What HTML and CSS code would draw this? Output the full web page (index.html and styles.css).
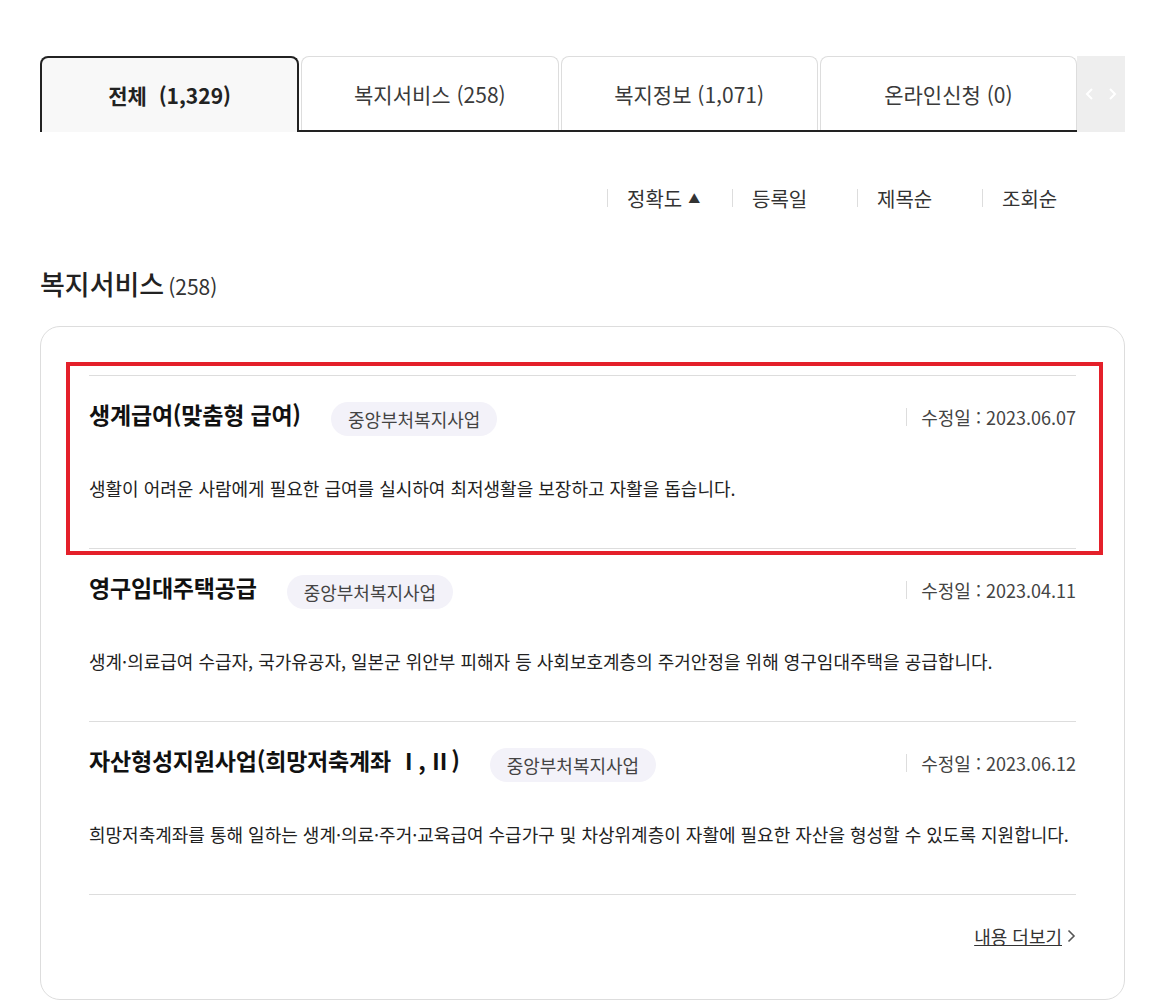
FILE: index.html
```html
<!DOCTYPE html>
<html lang="ko">
<head>
    <meta charset="UTF-8">
    <meta name="viewport" content="width=device-width, initial-scale=1.0">
    <title>복지서비스 검색결과</title>
    <link rel="stylesheet" href="styles.css">
</head>
<body>
    <div class="wrap">
        <div class="tabs">
            <a href="#" class="tab active">전체 &nbsp;(1,329)</a>
            <a href="#" class="tab">복지서비스 (258)</a>
            <a href="#" class="tab">복지정보 (1,071)</a>
            <a href="#" class="tab">온라인신청 (0)</a>
            <div class="tab-arrows">
                <svg width="34" height="14" viewBox="0 0 34 14">
                    <polyline points="8,2 3,7 8,12" fill="none" stroke="#fff" stroke-width="2"/>
                    <polyline points="26,2 31,7 26,12" fill="none" stroke="#fff" stroke-width="2"/>
                </svg>
            </div>
        </div>

        <div class="sort">
            <a href="#" class="sort-item">정확도 <span class="tri">▲</span></a>
            <a href="#" class="sort-item">등록일</a>
            <a href="#" class="sort-item">제목순</a>
            <a href="#" class="sort-item">조회순</a>
        </div>

        <h2 class="section-title">복지서비스<span class="count">(258)</span></h2>

        <div class="card">
            <ul class="list">
                <li class="item selected">
                    <div class="item-head">
                        <strong class="item-title">생계급여(맞춤형 급여)</strong>
                        <span class="badge">중앙부처복지사업</span>
                        <span class="date">수정일 : 2023.06.07</span>
                    </div>
                    <p class="item-desc">생활이 어려운 사람에게 필요한 급여를 실시하여 최저생활을 보장하고 자활을 돕습니다.</p>
                    <span class="highlight"></span>
                </li>
                <li class="item">
                    <div class="item-head">
                        <strong class="item-title">영구임대주택공급</strong>
                        <span class="badge">중앙부처복지사업</span>
                        <span class="date">수정일 : 2023.04.11</span>
                    </div>
                    <p class="item-desc">생계·의료급여 수급자, 국가유공자, 일본군 위안부 피해자 등 사회보호계층의 주거안정을 위해 영구임대주택을 공급합니다.</p>
                </li>
                <li class="item">
                    <div class="item-head">
                        <strong class="item-title">자산형성지원사업(희망저축계좌 <span class="roman">Ⅰ, Ⅱ</span>)</strong>
                        <span class="badge">중앙부처복지사업</span>
                        <span class="date">수정일 : 2023.06.12</span>
                    </div>
                    <p class="item-desc">희망저축계좌를 통해 일하는 생계·의료·주거·교육급여 수급가구 및 차상위계층이 자활에 필요한 자산을 형성할 수 있도록 지원합니다.</p>
                </li>
            </ul>
            <div class="more">
                <a href="#" class="more-link">내용 더보기</a>
                <svg class="more-icon" width="9" height="14" viewBox="0 0 9 14">
                    <polyline points="1.5,1.5 7,7 1.5,12.5" fill="none" stroke="#555" stroke-width="1.6"/>
                </svg>
            </div>
        </div>
    </div>
</body>
</html>
```

FILE: styles.css
```css
* {box-sizing: border-box;}
body {
    margin: 0;
    padding: 0;
    font-family: "Noto Sans CJK KR", "Noto Sans", sans-serif;
    color: #222;
    background: #fff;
}
a {
    color: inherit;
    text-decoration: none;
}
.wrap {
    width: 1085px;
    margin-left: 40px;
    padding-top: 56px;
}

/* tabs */
.tabs {
    display: flex;
    height: 76px;
    background: linear-gradient(to top, #222 2px, transparent 2px);
}
.tab {
    flex: 1;
    display: flex;
    align-items: center;
    justify-content: center;
    border: 1px solid #ddd;
    border-bottom: none;
    border-radius: 8px 8px 0 0;
    margin-right: 2px;
    margin-bottom: 2px;
    font-size: 21px;
    color: #3a3a3a;
}
.tab.active {
    border: 2px solid #222;
    border-bottom: none;
    margin-bottom: 0;
    background-color: #f8f8f8;
    color: #222;
    font-weight: bold;
}
.tab:nth-child(4) {
    margin-right: 0;
}
.tab-arrows {
    width: 48px;
    display: flex;
    align-items: center;
    justify-content: center;
    background-color: #eee;
}

/* sort */
.sort {
    display: flex;
    justify-content: flex-end;
    height: 36px;
    margin-top: 48px;
    padding-right: 18px;
}
.sort-item {
    width: 125px;
    display: flex;
    align-items: center;
    padding-left: 20px;
    font-size: 20px;
    color: #333;
    position: relative;
}
.sort-item::before {
    content: "";
    position: absolute;
    left: 0;
    top: 9px;
    height: 18px;
    border-left: 1px solid #ddd;
}
.tri {
    font-size: 12px;
    margin-left: 6px;
    color: #333;
}

/* title */
.section-title {
    height: 36px;
    margin: 50px 0 24px;
    font-size: 27px;
    line-height: 36px;
    font-weight: 500;
    color: #222;
}
.count {
    font-size: 21px;
    line-height: 1;
    font-weight: 400;
    color: #333;
    margin-left: 4px;
}

/* card */
.card {
    border: 1px solid #ddd;
    border-radius: 20px;
    padding: 48px 48px 0;
}
.list {
    list-style: none;
    margin: 0;
    padding: 0;
}
.item {
    position: relative;
    border-top: 1px solid #ddd;
    padding: 26px 0 47px;
}
.item-head {
    display: flex;
    align-items: center;
    height: 34px;
}
.item-title {
    font-size: 23px;
    font-weight: bold;
    color: #111;
    letter-spacing: -0.2px;
    margin-bottom: 10px;
}
.roman {
    letter-spacing: -2px;
    margin-right: 2px;
}
.badge {
    display: inline-flex;
    align-items: center;
    height: 34px;
    padding: 0 17px;
    margin-left: 30px;
    border-radius: 17px;
    background-color: #f3f2f9;
    font-size: 18px;
    color: #444;
}
.date {
    margin-left: auto;
    margin-bottom: 4px;
    padding-left: 14px;
    border-left: 1px solid #ddd;
    font-size: 18px;
    line-height: 18px;
    color: #444;
}
.item-desc {
    margin: 39px 0 0;
    font-size: 18px;
    line-height: 26px;
    color: #222;
}
.highlight {
    position: absolute;
    left: -23px;
    top: -14px;
    right: -27px;
    bottom: -7px;
    border: 4px solid #e4202a;
    pointer-events: none;
}

/* more */
.more {
    display: flex;
    justify-content: flex-end;
    align-items: center;
    border-top: 1px solid #ddd;
    padding: 29px 0 51px;
}
.more-link {
    font-size: 18px;
    line-height: 24px;
    color: #333;
    text-decoration: underline;
}
.more-icon {
    margin-left: 5px;
}
```
